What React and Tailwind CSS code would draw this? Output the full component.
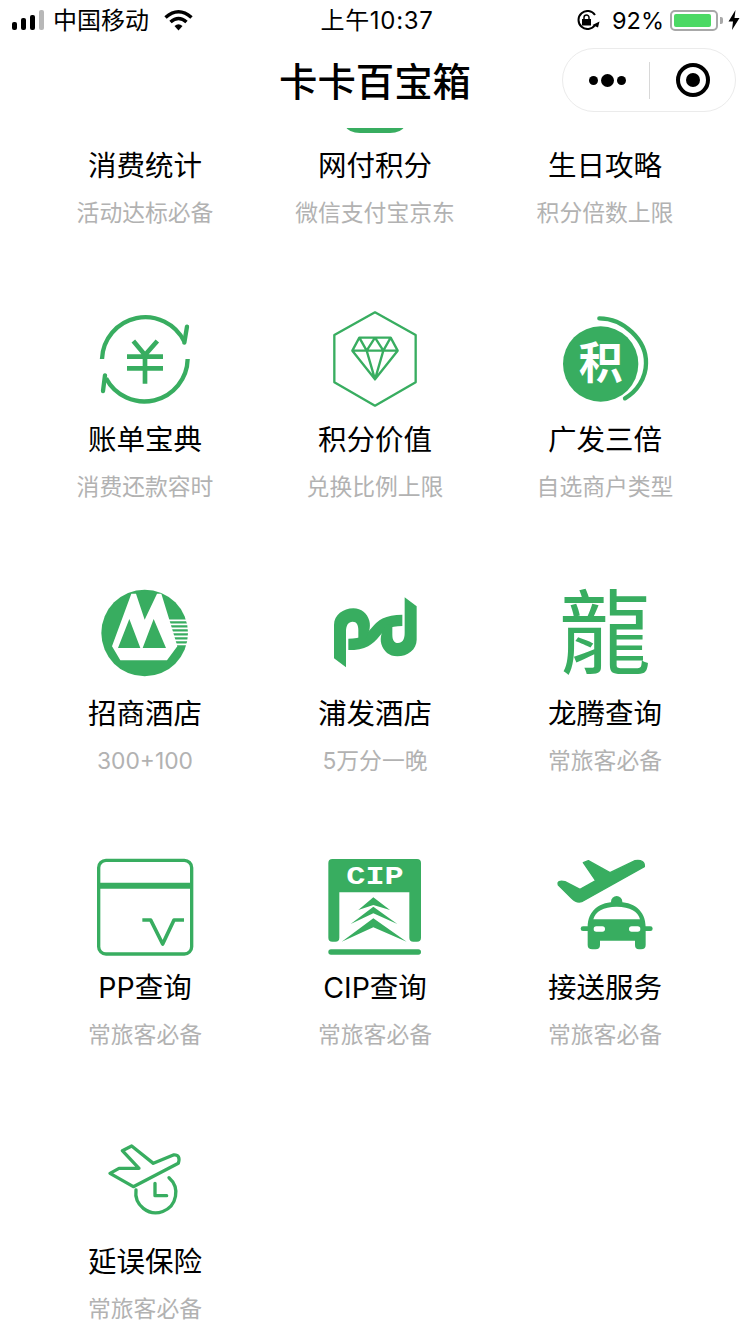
const GREEN = "#38ad60";

// every icon sits in a 120x96 box, drawn at 3x units
const Icon = ({ box, children }) => (
  <svg className="w-[120px] h-[96px] overflow-visible" viewBox={`${box} 360 288`} fill="none">
    {children}
  </svg>
);

const Sliver = () => (
  <Icon box="0 0">
    <path d="M90 270H270Q258 291 225 291H135Q102 291 90 270Z" fill={GREEN} />
  </Icon>
);

const BillIcon = () => (
  <Icon box="15 30">
    <g stroke={GREEN} strokeWidth="13">
      <path d="M66 177A130 130 0 0 1 313 125" />
      <path d="M323 177A130 130 0 0 1 78 235" />
      <path d="M321 80L313 128M75 226L69 273" strokeLinecap="round" />
      <path d="M160 123L195 165L232 123M195 165V251M141 170H249M141 205H249" strokeWidth="14" />
    </g>
  </Icon>
);

const DiamondIcon = () => (
  <Icon box="705 30">
    <g stroke={GREEN} strokeWidth="7" strokeLinejoin="round">
      <path d="M885 37L1007 105V247L885 317L763 247V105Z" />
      <path d="M838 113H932L953 152L885 238L817 152ZM817 152H953M838 113L860 152L885 113L910 152L932 113M860 152L885 238L910 152" />
    </g>
  </Icon>
);

const PointsIcon = () => (
  <Icon box="15 30">
    <circle cx="182" cy="192" r="113" fill={GREEN} />
    <path d="M178 55C250 55 320 120 318 190C318 235 290 275 255 295" stroke={GREEN} strokeWidth="13" strokeLinecap="round" />
    <text
      x="182"
      y="236"
      textAnchor="middle"
      fill="#fff"
      fontSize="132"
      fontWeight="700"
      fontFamily="'Noto Sans CJK SC', sans-serif"
    >
      积
    </text>
  </Icon>
);

const CmbIcon = () => (
  <Icon box="-31 3">
    <circle cx="148" cy="150" r="130" fill={GREEN} />
    <path d="M220 112H285M220 124H285M222 136H285M226 148H285M229 160H285M233 172H285M236 184H285" stroke="#fff" strokeWidth="5.500" />
    <path d="M50 190L108 32H122L148 110L185 32H198L222 110L246 190L215 232H75Z" fill="#fff" />
    <path d="M68 195L102 108L135 195ZM142 195L175 108L212 195Z" fill={GREEN} />
  </Icon>
);

const PsbBowl = (
  <path d="M27 205V105C27 75 55 55 85 55C110 55 126 70 133 92C138 112 132 132 118 150H100V120C100 105 95 95 83 95C70 95 63 105 63 125V232Z" fill={GREEN} />
);

const PsbIcon = () => (
  <Icon box="-30 -18">
    <path d="M232 91C185 91 168 105 151 127C134 149 117 163 70 163" stroke={GREEN} strokeWidth="34" />
    {PsbBowl}
    <g transform="rotate(180 151 127)">{PsbBowl}</g>
  </Icon>
);

const DragonIcon = () => (
  <Icon box="-15 12">
    <text
      x="165"
      y="262"
      textAnchor="middle"
      fill={GREEN}
      fontSize="276"
      fontFamily="'Noto Sans CJK TC', sans-serif"
    >
      龍
    </text>
  </Icon>
);

const PpIcon = () => (
  <Icon box="-15 24">
    <g stroke={GREEN}>
      <rect x="26" y="31" width="279" height="281" rx="22" strokeWidth="10" />
      <path d="M26 107H305" strokeWidth="18" />
      <path d="M157 210H182L218 282L252 210H282" strokeWidth="11" strokeLinejoin="round" />
    </g>
  </Icon>
);

const CipIcon = () => (
  <Icon box="675 24">
    <path
      d="M727 27H981Q993 27 993 39V263Q993 275 981 275H970Q958 275 958 263V127H748V263Q748 275 736 275H727Q715 275 715 263V39Q715 27 727 27Z"
      fill={GREEN}
    />
    <text
      x="855"
      y="102"
      textAnchor="middle"
      fill="#fff"
      fontSize="76"
      fontWeight="700"
      textLength="172"
      lengthAdjust="spacingAndGlyphs"
      fontFamily="'Liberation Mono', monospace"
    >
      CIP
    </text>
    <path
      d="M850 142L900 180L850 165L805 180ZM850 170L922 222L850 190L782 222ZM850 205L950 275L850 232L755 275Z"
      fill={GREEN}
    />
    <rect x="715" y="298" width="278" height="16" rx="8" fill={GREEN} />
  </Icon>
);

const TransferIcon = () => (
  <Icon box="0 24">
    <path
      d="M115 38L130 32L195 68L270 32Q300 28 298 50L110 155Q95 160 80 145L40 105Q35 90 60 95L105 118L152 92Z"
      fill={GREEN}
      stroke={GREEN}
      strokeWidth="4"
      strokeLinejoin="round"
    />
    <circle cx="215" cy="155" r="17" fill={GREEN} />
    <path
      d="M128 232C128 180 165 155 215 155C265 155 302 180 302 232V285Q302 298 288 298H282Q270 298 270 285V272H165V285Q165 298 152 298H142Q128 298 128 285Z"
      fill={GREEN}
    />
    <path d="M114 236H316" stroke={GREEN} strokeWidth="14" strokeLinecap="round" />
    <path d="M145 208C150 185 175 170 215 170C255 170 280 185 285 208Z" fill="#fff" />
    <rect x="146" y="229" width="34" height="16" rx="8" fill="#fff" />
    <rect x="252" y="229" width="34" height="16" rx="8" fill="#fff" />
  </Icon>
);

const DelayIcon = () => (
  <Icon box="-30 -9">
    <g stroke={GREEN} strokeWidth="10" strokeLinecap="round" strokeLinejoin="round">
      <path d="M82 47L110 33L175 85L235 60Q258 58 250 85L115 155L45 115L72 100L132 100Z" />
      <path d="M123 165A60 60 0 1 0 222 128" />
      <path d="M180 145V182H215" />
    </g>
  </Icon>
);

const rows = [
  { name: "消费统计", desc: "活动达标必备" },
  { icon: Sliver, name: "网付积分", desc: "微信支付宝京东" },
  { name: "生日攻略", desc: "积分倍数上限" },
  { icon: BillIcon, name: "账单宝典", desc: "消费还款容时" },
  { icon: DiamondIcon, name: "积分价值", desc: "兑换比例上限" },
  { icon: PointsIcon, name: "广发三倍", desc: "自选商户类型" },
  { icon: CmbIcon, name: "招商酒店", desc: "300+100" },
  { icon: PsbIcon, name: "浦发酒店", desc: "5万分一晚" },
  { icon: DragonIcon, name: "龙腾查询", desc: "常旅客必备" },
  { icon: PpIcon, name: "PP查询", desc: "常旅客必备" },
  { icon: CipIcon, name: "CIP查询", desc: "常旅客必备" },
  { icon: TransferIcon, name: "接送服务", desc: "常旅客必备" },
  { icon: DelayIcon, name: "延误保险", desc: "常旅客必备" },
];

const StatusBar = () => (
  <div className="h-10 grid grid-cols-[1fr_auto_1fr] items-center text-[24px] text-black">
    <div className="flex items-center pl-3">
      <div className="flex items-end gap-1 h-5">
        <span className="w-[5px] h-2 rounded-[2px] bg-black" />
        <span className="w-[5px] h-3 rounded-[2px] bg-black" />
        <span className="w-[5px] h-[15px] rounded-[2px] bg-black" />
        <span className="w-[5px] h-5 rounded-[2px] bg-[#b8b8b8]" />
      </div>
      <span className="ml-[9px] pt-[2px] leading-none">中国移动</span>
      <svg className="ml-[15px]" width="29" height="22" viewBox="0 0 29 22" fill="none" stroke="black">
        <path d="M1.500 8.500Q14.500 -3 27.500 8.500" strokeWidth="3.500" />
        <path d="M6.500 13Q14.500 6 22.500 13" strokeWidth="3.500" />
        <path d="M10.500 17Q14.500 13.500 18.500 17L14.500 21.500Z" fill="black" strokeWidth="0" />
      </svg>
    </div>
    <div className="pl-1 pt-[2px] leading-none tracking-[0.7px]">上午10:37</div>
    <div className="flex items-center justify-end pr-[10px]">
      <svg width="24" height="20" viewBox="0 0 24 20" fill="none" stroke="black" strokeWidth="2">
        <path d="M19 5A9 9 0 1 0 19 15" />
        <path d="M16.500 15L23.500 11.500L22 17.500Z" fill="black" strokeWidth="0" />
        <rect x="6" y="9" width="9" height="6.500" fill="black" strokeWidth="0" />
        <path d="M8 9V7.500A2.500 2.500 0 0 1 13 7.500V9" strokeWidth="1.500" />
      </svg>
      <span className="ml-3 pt-[2px] leading-none text-[23.5px]">92%</span>
      <div className="ml-[6px] w-12 h-[21px] border-2 border-[#a8a8a8] rounded-[5px] p-[2px]">
        <div className="w-[92%] h-full rounded-[2px] bg-[#4cd964]" />
      </div>
      <span className="ml-[2px] w-[3px] h-[7px] bg-[#a8a8a8] rounded-r-[2px]" />
      <svg className="ml-[5px]" width="12" height="20" viewBox="0 0 11 20" fill="black">
        <path d="M7 0L0 11.500H4.500L3.500 20L11 8H6Z" />
      </svg>
    </div>
  </div>
);

const NavBar = () => (
  <div className="h-20 grid grid-cols-[1fr_auto_1fr] items-center">
    <div />
    <h1 className="pt-1 text-[38.4px] leading-none font-medium text-black">卡卡百宝箱</h1>
    <div className="justify-self-end mr-[14px] w-[174px] h-16 rounded-full border border-[#ebebeb] bg-white flex items-center">
      <div className="w-[86px] pl-[3px] flex items-center justify-center gap-[3px]">
        <span className="w-[9px] h-[9px] rounded-full bg-black" />
        <span className="w-[13px] h-[13px] rounded-full bg-black" />
        <span className="w-[9px] h-[9px] rounded-full bg-black" />
      </div>
      <span className="w-px h-[37px] bg-[#d8d8d8]" />
      <div className="flex-1 flex items-center justify-center">
        <div className="w-[34px] h-[34px] rounded-full border-4 border-black flex items-center justify-center">
          <span className="w-[14px] h-[14px] rounded-full bg-black" />
        </div>
      </div>
    </div>
  </div>
);

export default function App() {
  return (
    <div className="w-[750px] h-[1334px] overflow-hidden bg-white font-['Inter','Noto_Sans_CJK_SC',sans-serif]">
      {/* top bars stay above the scrolled list */}
      <header className="relative z-10 h-32 bg-white">
        <StatusBar />
        <NavBar />
      </header>

      {/* the list is scrolled, first row is half hidden under the header */}
      <div className="-mt-[92px] px-[30px] grid grid-cols-3">
        {rows.map((item) => (
          <div key={item.name} className="h-[274px] flex flex-col items-center">
            {item.icon ? <item.icon /> : <div className="h-24" />}
            <div className="mt-[14px] h-10 leading-10 text-[28.5px] text-black">{item.name}</div>
            <div className="mt-[11px] h-8 leading-8 text-[22.8px] text-[#b2b2b2]">{item.desc}</div>
          </div>
        ))}
      </div>
    </div>
  );
}
